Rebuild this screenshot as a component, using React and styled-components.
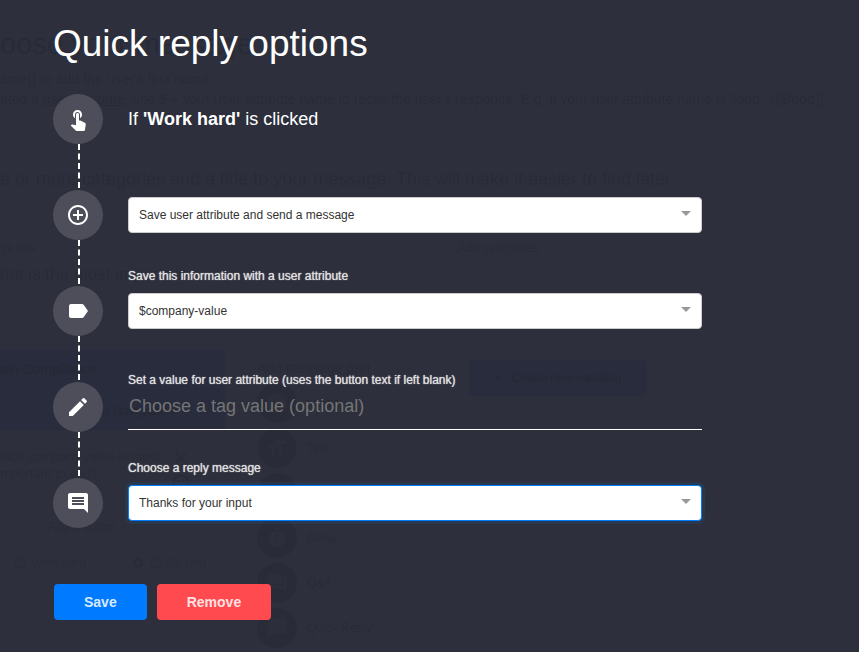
import { useState } from "react";
import styled, { createGlobalStyle } from "styled-components";
import {
	MdAddCircleOutline,
	MdCameraAlt,
	MdChatBubble,
	MdClose,
	MdComment,
	MdFormatSize,
	MdImage,
	MdLabel,
	MdModeEdit,
	MdQuestionAnswer,
	MdSentimentSatisfied,
	MdSettings,
	MdTimer,
	MdTouchApp
} from "react-icons/md";

const GlobalStyle = createGlobalStyle`
	*, *::before, *::after {
		box-sizing: border-box;
	}

	body {
		background-color: #fff;
		font-family: "Liberation Sans", Arial, sans-serif;
		margin: 0;
	}
`;

const Screen = styled.div`
	min-height: 100vh;
	position: relative;
`;

/* The message editor that stays open behind the modal */

const Editor = styled.div`
	color: #777;
	font-size: 14px;
	inset: 0;
	line-height: 20px;
	overflow: hidden;
	padding-top: 23px;
	position: absolute;
	white-space: nowrap;
`;

const EditorIntro = styled.div`
	border-top: 1px solid #ddd;
	height: 142px;
	padding-top: 4px;
`;

const EditorTitle = styled.div`
	font-size: 29px;
	line-height: 32px;
	margin-bottom: 9px;
`;

const EditorLead = styled.div`
	font-size: 18px;
	line-height: 28px;
	margin-bottom: 46px;
`;

const EditorColumns = styled.div`
	display: grid;
	grid-template-columns: 428px 1fr;
	column-gap: 30px;
	height: 111px;
`;

const EditorLabel = styled.div`
	font-size: 12px;
	line-height: 18px;
`;

const EditorInput = styled.div`
	border-bottom: 1px solid #bbb;
	font-size: 17px;
	height: 36px;
	line-height: 36px;
`;

const EditorTags = styled.div`
	border: 1px solid #ddd;
	border-radius: 4px;
	height: 31px;
`;

const EditorPanels = styled.div`
	align-items: flex-start;
	display: flex;
`;

const Preview = styled.div`
	border-right: 1px solid #eee;
	height: 310px;
	width: 226px;
`;

const PreviewHead = styled.div`
	background-color: #7c90ea;
	color: #444;
	display: flex;
	flex-direction: column;
	height: 80px;
	justify-content: space-between;
	padding: 9px 0;
`;

const PreviewNav = styled.div`
	font-size: 13px;
	padding-left: 92px;
`;

const PreviewText = styled.div`
	display: flex;
	font-size: 13px;
	justify-content: space-between;
	line-height: 17px;
	padding: 18px 34px 0 0;
`;

const PreviewIcons = styled.div`
	display: flex;
	flex-direction: column;
	font-size: 20px;
	gap: 5px;
`;

const PreviewAdd = styled.div`
	font-size: 12px;
	padding: 24px 0 10px 48px;
`;

const Pills = styled.div`
	color: #7a7e98;
	display: flex;
	gap: 10px;
`;

const Pill = styled.div`
	align-items: center;
	border: 1px solid #ccc;
	border-radius: 16px;
	display: flex;
	font-size: 12px;
	gap: 4px;
	height: 31px;
	padding: 0 12px;
	width: 109px;

	svg {
		flex: none;
		font-size: 14px;
	}
`;

const Parts = styled.div`
	border: 1px solid #eee;
	margin-left: 21px;
	padding: 7px 9px;
	width: 191px;
`;

const Part = styled.div`
	align-items: center;
	display: flex;
	font-size: 12px;
	gap: 10px;
	margin-top: 5px;
`;

const PartIcon = styled.div`
	align-items: center;
	background-color: #999;
	border-radius: 50%;
	color: #ddd;
	display: flex;
	font-size: 22px;
	height: 40px;
	justify-content: center;
	width: 40px;
`;

const NewVariation = styled.div`
	align-items: center;
	background-color: #7c90ea;
	border-radius: 4px;
	color: #444;
	display: flex;
	font-size: 12px;
	gap: 10px;
	height: 36px;
	justify-content: center;
	margin: 10px 0 0 31px;
	width: 178px;
`;

/* Modal */

const Modal = styled.main`
	background-color: rgba(36, 40, 52, 0.96);
	min-height: 100vh;
	padding: 23px 157px 32px 53px;
	position: relative;
`;

const Title = styled.h1`
	color: #fff;
	font-size: 37px;
	font-weight: 400;
	line-height: 42px;
	margin: 0 0 29px;
`;

const StyledStep = styled.div`
	align-items: end;
	column-gap: 25px;
	display: grid;
	grid-template-columns: 50px 1fr;
`;

const Connector = styled.div`
	border-left: 2px dashed #fff;
	height: 44px;
	margin: 0 0 2px 25px;
`;

const Circle = styled.div`
	align-items: center;
	background-color: #4d4e5a;
	border-radius: 50%;
	color: #fff;
	display: flex;
	font-size: 24px;
	height: 50px;
	justify-content: center;
`;

const Condition = styled.p`
	color: #fff;
	font-size: 18px;
	line-height: 50px;
	margin: 0;
`;

const Field = styled.div`
	padding-bottom: ${({ $flush }) => ($flush ? 2 : 7)}px;
`;

const Label = styled.label`
	color: #e0e0e0;
	display: block;
	font-size: 12px;
	line-height: 16px;
	margin-bottom: ${({ $flush }) => ($flush ? 0 : 9)}px;
	text-shadow: 0 0 1px #e0e0e0;
`;

const SelectBox = styled.div`
	position: relative;

	&::after {
		border: 5px solid transparent;
		border-bottom: 0;
		border-top-color: #999;
		content: "";
		pointer-events: none;
		position: absolute;
		right: 11px;
		top: 14px;
	}
`;

const StyledSelect = styled.select`
	appearance: none;
	background-color: #fff;
	border: 1px solid ${({ $active }) => ($active ? "#007eff" : "#ccc")};
	border-radius: 4px;
	box-shadow: ${({ $active }) =>
		$active ? "0 0 0 3px rgba(0, 126, 255, 0.1)" : "none"};
	color: #333;
	display: block;
	font-family: inherit;
	font-size: 12px;
	height: 36px;
	outline: none;
	padding: 0 30px 0 10px;
	width: 100%;
`;

const TextInput = styled.input`
	background-color: transparent;
	border: 0;
	border-bottom: 1px solid #fff;
	border-radius: 0;
	color: #fff;
	display: block;
	font-family: inherit;
	font-size: 18px;
	height: 42px;
	outline: none;
	padding: 0 1px 4px;
	width: 100%;

	&::placeholder {
		color: #757575;
		opacity: 1;
	}
`;

const Actions = styled.div`
	display: flex;
	gap: 10px;
	margin-top: 56px;
	padding-left: 1px;
`;

const Button = styled.button`
	background-color: ${({ $danger }) => ($danger ? "#ff4b4f" : "#007bff")};
	border: 0;
	border-radius: 4px;
	color: rgba(255, 255, 255, 0.85);
	cursor: pointer;
	font-family: inherit;
	font-size: 14px;
	font-weight: 700;
	height: 36px;
	padding: 0 30px;
`;

const parts = [
	{ icon: MdCameraAlt, name: "Media" },
	{ icon: MdFormatSize, name: "Text" },
	{ icon: MdImage, name: "Image" },
	{ icon: MdTimer, name: "Delay" },
	{ icon: MdQuestionAnswer, name: "Q&A" },
	{ icon: MdChatBubble, name: "Quick Reply" }
];

const MessageEditor = () => (
	<Editor aria-hidden="true">
		<EditorIntro>
			<EditorTitle>oose your message</EditorTitle>
			<div>ame{"}}"} to add the user's first name.</div>
			<div>
				ated a <u>user attribute</u>, use $ + your user attribute name to recall
				the user's response. E.g. if your user attribute name is 'food',{" "}
				{"{{$food}}"}.
			</div>
		</EditorIntro>
		<EditorLead>
			e or more categories and a title to your message. This will make it easier
			to find later.
		</EditorLead>
		<EditorColumns>
			<div>
				<EditorLabel>ge title</EditorLabel>
				<EditorInput>hat is the most important</EditorInput>
			</div>
			<div>
				<EditorLabel>Add categories</EditorLabel>
				<EditorTags />
			</div>
		</EditorColumns>
		<EditorPanels>
			<Preview>
				<PreviewHead>
					<div>ain Compliance</div>
					<PreviewNav>Go Navigation</PreviewNav>
				</PreviewHead>
				<PreviewText>
					<div>
						hich company value is most
						<br />
						mportant to you?
					</div>
					<PreviewIcons>
						<MdClose />
						<MdSentimentSatisfied />
					</PreviewIcons>
				</PreviewText>
				<PreviewAdd>Add a button...</PreviewAdd>
				<Pills>
					<Pill>
						<MdSentimentSatisfied />
						Work hard
					</Pill>
					<Pill>
						<MdSettings />
						<MdSentimentSatisfied />
						Be kind
					</Pill>
				</Pills>
			</Preview>
			<Parts>
				<div>Add message part</div>
				{parts.map(({ icon: Icon, name }) => (
					<Part key={name}>
						<PartIcon>
							<Icon />
						</PartIcon>
						{name}
					</Part>
				))}
			</Parts>
			<NewVariation>
				<span>+</span>
				Create new variation
			</NewVariation>
		</EditorPanels>
	</Editor>
);

const Step = ({ icon: Icon, first, children }) => (
	<StyledStep>
		<div>
			{!first && <Connector />}
			<Circle>
				<Icon />
			</Circle>
		</div>
		{children}
	</StyledStep>
);

const Select = ({ options, active, ...props }) => (
	<SelectBox>
		<StyledSelect $active={active} {...props}>
			{options.map(option => (
				<option key={option}>{option}</option>
			))}
		</StyledSelect>
	</SelectBox>
);

const App = () => {
	const [tagValue, setTagValue] = useState("");

	return (
		<Screen>
			<GlobalStyle />
			<MessageEditor />
			<Modal>
				<Title>Quick reply options</Title>
				<Step icon={MdTouchApp} first>
					<Condition>
						If <strong>'Work hard'</strong> is clicked
					</Condition>
				</Step>
				<Step icon={MdAddCircleOutline}>
					<Field>
						<Select
							aria-label="Action"
							options={["Save user attribute and send a message"]}
						/>
					</Field>
				</Step>
				<Step icon={MdLabel}>
					<Field>
						<Label htmlFor="attribute">
							Save this information with a user attribute
						</Label>
						<Select id="attribute" options={["$company-value"]} />
					</Field>
				</Step>
				<Step icon={MdModeEdit}>
					<Field $flush>
						<Label htmlFor="tag-value" $flush>
							Set a value for user attribute (uses the button text if left
							blank)
						</Label>
						<TextInput
							id="tag-value"
							placeholder="Choose a tag value (optional)"
							value={tagValue}
							onChange={e => setTagValue(e.target.value)}
						/>
					</Field>
				</Step>
				<Step icon={MdComment}>
					<Field>
						<Label htmlFor="reply">Choose a reply message</Label>
						<Select id="reply" options={["Thanks for your input"]} active />
					</Field>
				</Step>
				<Actions>
					<Button type="button">Save</Button>
					<Button type="button" $danger>
						Remove
					</Button>
				</Actions>
			</Modal>
		</Screen>
	);
};

export default App;
